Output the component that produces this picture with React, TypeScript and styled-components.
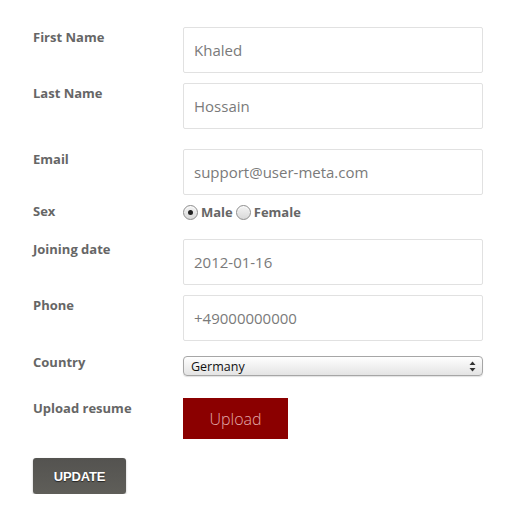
import React from "react";
import styled, { createGlobalStyle } from "styled-components";

const Global = createGlobalStyle`
  html, body { margin: 0; padding: 0; background: #fff; }
  body { font-family: "Open Sans", "Liberation Sans", sans-serif; }
  * { box-sizing: border-box; }
`;

const Form = styled.form`
  display: flex;
  flex-direction: column;
  padding: 27px 40px 0 33px;
  width: 523px;
`;

const Row = styled.div<{ $mt?: number }>`
  display: flex;
  align-items: flex-start;
  margin-top: ${(p) => p.$mt ?? 0}px;
`;

const Label = styled.label<{ $shift?: number }>`
  width: 150px;
  flex: none;
  margin-top: ${(p) => p.$shift ?? 1}px;
  font-size: 13px;
  line-height: 18px;
  font-weight: 700;
  color: #666;
`;

const TextInput = styled.input`
  display: block;
  width: 300px;
  height: 46px;
  border: 1px solid #e1e1e1;
  border-radius: 2px;
  padding: 0 10px;
  font-family: "Open Sans", "Liberation Sans", sans-serif;
  font-size: 15px;
  color: #7a7a7a;
  background: #fff;
  outline: none;
`;

const RadioGroup = styled.div`
  display: flex;
  align-items: center;
  height: 16px;
  margin-top: 3px;
`;

const RadioOption = styled.label`
  display: flex;
  align-items: center;
  gap: 3px;
  margin-right: 3px;
  font-size: 13px;
  font-weight: 700;
  color: #666;
`;

const RadioDot = styled.span<{ $checked?: boolean }>`
  display: inline-flex;
  align-items: center;
  justify-content: center;
  width: 15px;
  height: 15px;
  border-radius: 50%;
  border: 1px solid #8e8e8e;
  background: linear-gradient(#f4f4f4, #d9d9d9);
  box-shadow: inset 0 1px 1px rgba(255, 255, 255, 0.8);
  &::after {
    content: "";
    display: ${(p) => (p.$checked ? "block" : "none")};
    width: 5px;
    height: 5px;
    border-radius: 50%;
    background: #222;
  }
`;

const SelectWrap = styled.div`
  position: relative;
  width: 300px;
  height: 20px;
`;

const Select = styled.select`
  display: block;
  appearance: none;
  -webkit-appearance: none;
  width: 300px;
  height: 20px;
  border: 1px solid #a6a6a6;
  border-radius: 4px;
  padding: 0 20px 0 7px;
  font-family: "Open Sans", "Liberation Sans", sans-serif;
  font-size: 12.5px;
  color: #111;
  background: linear-gradient(#ffffff, #f1f1f1 50%, #e4e4e4);
  box-shadow: 0 1px 1px rgba(0, 0, 0, 0.12);
  outline: none;
`;

const Arrows = styled.svg`
  position: absolute;
  right: 7px;
  top: 5px;
  pointer-events: none;
`;

const UploadButton = styled.button`
  display: block;
  width: 105px;
  height: 41px;
  border: none;
  border-radius: 0;
  background: #8b0000;
  color: #e2a9a9;
  font-family: "Open Sans", "Liberation Sans", sans-serif;
  font-size: 16px;
  font-weight: 300;
  padding: 0;
  cursor: pointer;
`;

const SubmitButton = styled.button`
  display: block;
  width: 93px;
  height: 36px;
  border: none;
  border-radius: 3px;
  background: linear-gradient(#545350, #5f5e59);
  box-shadow: 0 1px 2px rgba(0, 0, 0, 0.3);
  color: #fff;
  font-family: "Liberation Sans", Arial, sans-serif;
  font-size: 13px;
  font-weight: 700;
  text-shadow: 0 1px 1px rgba(0, 0, 0, 0.6);
  letter-spacing: -0.2px;
  padding: 0;
`;

export default function App() {
  return (
    <>
      <Global />
      <Form onSubmit={(e) => e.preventDefault()}>
        <Row>
          <Label>First Name</Label>
          <TextInput defaultValue="Khaled" />
        </Row>
        <Row $mt={10}>
          <Label>Last Name</Label>
          <TextInput defaultValue="Hossain" />
        </Row>
        <Row $mt={20}>
          <Label>Email</Label>
          <TextInput defaultValue="support@user-meta.com" />
        </Row>
        <Row $mt={6}>
          <Label>Sex</Label>
          <RadioGroup>
            <RadioOption>
              <RadioDot $checked />
              Male
            </RadioOption>
            <RadioOption>
              <RadioDot />
              Female
            </RadioOption>
          </RadioGroup>
        </Row>
        <Row $mt={19}>
          <Label>Joining date</Label>
          <TextInput defaultValue="2012-01-16" />
        </Row>
        <Row $mt={10}>
          <Label>Phone</Label>
          <TextInput defaultValue="+49000000000" />
        </Row>
        <Row $mt={15}>
          <Label $shift={-3}>Country</Label>
          <SelectWrap>
            <Select defaultValue="Germany">
              <option>Germany</option>
            </Select>
            <Arrows width="7" height="11" viewBox="0 0 7 11">
              <path d="M3.5 0.5 L6.5 4 L0.5 4 Z" fill="#333" />
              <path d="M3.5 10.5 L6.5 7 L0.5 7 Z" fill="#333" />
            </Arrows>
          </SelectWrap>
        </Row>
        <Row $mt={22}>
          <Label>Upload resume</Label>
          <UploadButton type="button">Upload</UploadButton>
        </Row>
        <Row $mt={19}>
          <SubmitButton type="submit">UPDATE</SubmitButton>
        </Row>
      </Form>
    </>
  );
}
